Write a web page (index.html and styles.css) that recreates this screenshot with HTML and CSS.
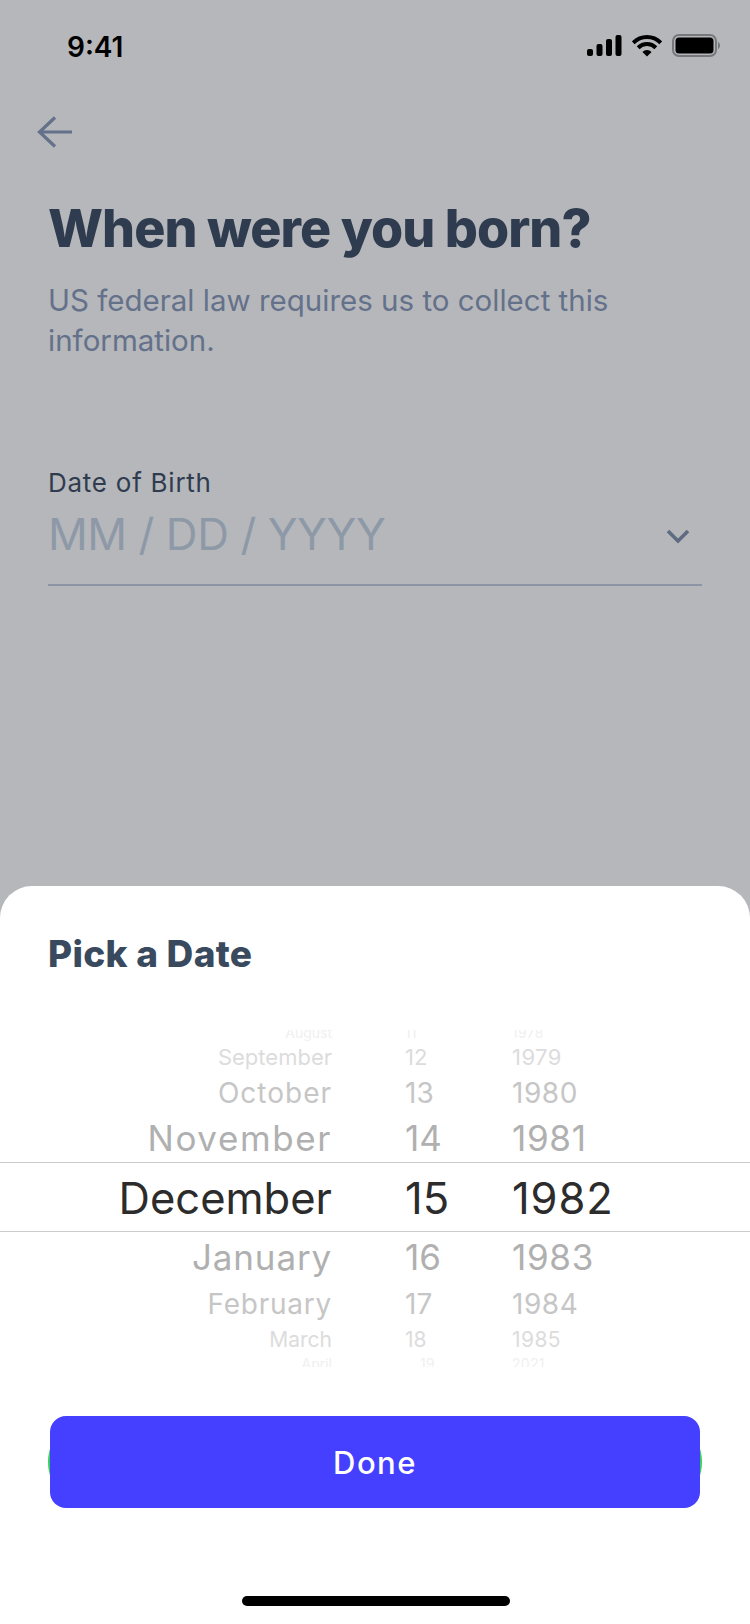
FILE: index.html
```html
<!DOCTYPE html>
<html lang="en">
<head>
    <meta charset="UTF-8">
    <meta name="viewport" content="width=device-width, initial-scale=1.0">
    <title>Date of Birth</title>
    <link rel="stylesheet" href="styles.css">
</head>
<body>
    <div class="screen">
        <div class="backdrop">
            <div class="status-bar">
                <span class="status-time">9:41</span>
                <div class="status-icons">
                    <svg width="35" height="22" viewBox="0 0 35 22"><rect x="0" y="14" width="6" height="7" rx="2"/><rect x="9.5" y="9" width="6" height="12" rx="2"/><rect x="19" y="4" width="6" height="17" rx="2"/><rect x="28.5" y="0" width="6" height="21" rx="2"/></svg>
                    <svg width="30" height="23" viewBox="0 0 30 23"><path d="M1.2 8.800a19.500 19.500 0 0 1 27.600 0" fill="none" stroke="#000" stroke-width="4"/><path d="M6.160 13.760a12.500 12.500 0 0 1 17.680 0" fill="none" stroke="#000" stroke-width="4"/><path d="M10.400 18 15 22.600l4.600-4.600a6.500 6.500 0 0 0-9.200 0z"/></svg>
                    <svg width="48" height="23" viewBox="0 0 48 23"><rect x="1" y="1" width="43" height="21" rx="6" fill="none" stroke="#77787b" stroke-width="2"/><rect x="3.5" y="3.5" width="38" height="16" rx="3.5"/><path d="M46 8v7c1.2-.5 2-2 2-3.500S47.200 8.500 46 8z" fill="#77787b"/></svg>
                </div>
            </div>
            <svg class="back-arrow" width="36" height="32" viewBox="0 0 36 32"><path d="M35 16H3M18 1.500 2.500 16 18 30.500" fill="none" stroke="#64718a" stroke-width="3.200"/></svg>
            <h1 class="title">When were you born?</h1>
            <p class="subtitle">US federal law requires us to collect this information.</p>
            <div class="field">
                <label class="field-label">Date of Birth</label>
                <div class="field-input">
                    <span class="placeholder">MM / DD / YYYY</span>
                    <svg class="chevron" width="24" height="15" viewBox="0 0 24 15"><path d="M2 2l10 10L22 2" fill="none" stroke="#5f6b80" stroke-width="3.600"/></svg>
                </div>
            </div>
        </div>
        <div class="sheet">
            <h2 class="sheet-title">Pick a Date</h2>
            <div class="picker">
                <div class="row row-aug"><span>August</span><span>11</span><span>1978</span></div>
                <div class="row row-sep"><span>September</span><span>12</span><span>1979</span></div>
                <div class="row row-oct"><span>October</span><span>13</span><span>1980</span></div>
                <div class="row row-nov"><span>November</span><span>14</span><span>1981</span></div>
                <div class="row row-dec"><span>December</span><span>15</span><span>1982</span></div>
                <div class="row row-jan"><span>January</span><span>16</span><span>1983</span></div>
                <div class="row row-feb"><span>February</span><span>17</span><span>1984</span></div>
                <div class="row row-mar"><span>March</span><span>18</span><span>1985</span></div>
                <div class="row row-apr"><span>April</span><span>19</span><span>2021</span></div>
            </div>
            <div class="done-wrap">
                <button class="done-btn">Done</button>
            </div>
            <div class="home-bar"></div>
        </div>
    </div>
</body>
</html>
```
FILE: styles.css
```css
body {
    margin: 0;
    font-family: Inter, "Open Sans", sans-serif;
}

.screen {
    width: 750px;
    height: 1624px;
    display: flex;
    flex-direction: column;
    background: #b6b7bb;
    overflow: hidden;
}

.backdrop {
    flex: 1;
    padding: 0 48px;
}

.status-bar {
    display: flex;
    justify-content: space-between;
    align-items: center;
    height: 23px;
    padding: 34px 0 0 19px;
    margin-right: -18px;
}

.status-time {
    margin-top: 2px;
    font-weight: 600;
    font-size: 28px;
    color: #000;
}

.status-icons {
    display: flex;
    align-items: center;
    gap: 10px;
}

.back-arrow {
    display: block;
    margin: 59px 0 0 -11px;
}

.title {
    margin: 49px 0 0;
    font-size: 52px;
    line-height: 64px;
    font-weight: 800;
    letter-spacing: -0.95px;
    color: #2f3c4f;
}

.subtitle {
    margin: 19px 0 0;
    font-size: 29.5px;
    line-height: 40px;
    color: #64718a;
}

.field {
    margin-top: 107px;
}

.field-label {
    display: block;
    font-size: 26px;
    line-height: 32px;
    letter-spacing: 0.75px;
    color: #2f3c4f;
}

.field-input {
    display: flex;
    justify-content: space-between;
    align-items: center;
    height: 69px;
    padding: 0 12px 16px 0;
    border-bottom: 2px solid #8d94a5;
}

.placeholder {
    font-size: 44px;
    letter-spacing: -0.45px;
    color: #8e99a8;
}

.chevron {
    margin-top: 6px;
}

.sheet {
    height: 738px;
    box-sizing: border-box;
    background: #fff;
    border-radius: 32px 32px 0 0;
    padding-top: 46px;
    display: flex;
    flex-direction: column;
}

.sheet-title {
    margin: 0 0 0 48px;
    font-size: 37px;
    line-height: 44px;
    font-weight: 800;
    letter-spacing: 0.3px;
    color: #3a4a5e;
}

.picker {
    margin-top: 54px;
    position: relative;
}

.picker::before {
    content: '';
    position: absolute;
    left: 0;
    right: 0;
    top: 132px;
    height: 68px;
    border-top: 1px solid #ccc;
    border-bottom: 1px solid #ccc;
}

.row {
    display: grid;
    grid-template-columns: 332px 180px 1fr;
    align-items: center;
    overflow: hidden;
    white-space: nowrap;
}

.row span:first-child {
    text-align: right;
}

.row span:nth-child(2) {
    padding-left: 73px;
}

.row span:last-child {
    letter-spacing: 0.02em;
}

.row-aug { height: 12px; font-size: 14px; line-height: 14px; align-items: start; color: #f0f0f0; }
.row-sep { height: 30px; font-size: 22px; color: #dcdcdc; }
.row-oct { height: 41px; font-size: 28px; color: #c6c6c6; }
.row-nov { height: 50px; font-size: 35px; color: #b0b0b0; }
.row-dec { height: 69px; font-size: 43.5px; color: #2c2c2c; }
.row-jan { height: 49px; font-size: 35px; color: #b0b0b0; }
.row-feb { height: 46px; font-size: 28px; color: #c6c6c6; }
.row-mar { height: 25px; font-size: 21px; color: #dcdcdc; }
.row-apr { height: 10px; padding-top: 5px; font-size: 14px; line-height: 14px; align-items: start; color: #f0f0f0; }

.row-aug span { margin-top: -4px; }
.row-oct span:first-child { letter-spacing: 1px; }
.row-nov span:first-child { letter-spacing: 1.6px; }
.row-jan span:first-child { letter-spacing: 0.85px; }
.row-feb span:first-child { letter-spacing: 0.75px; }
.row-apr span:nth-child(2) { padding-left: 88px; }

.done-wrap {
    position: relative;
    margin: 49px 50px 0;
}

.done-wrap::before {
    content: '';
    position: absolute;
    left: -2px;
    right: -2px;
    top: 0;
    bottom: 0;
    border-radius: 46px;
    background: #3ad05a;
}

.done-btn {
    position: relative;
    display: block;
    width: 100%;
    height: 92px;
    border: none;
    border-radius: 16px;
    background: #453fff;
    color: #fff;
    font-family: Inter, sans-serif;
    font-size: 31px;
    font-weight: 500;
    letter-spacing: 1.5px;
}

.home-bar {
    width: 268px;
    height: 10px;
    margin: auto 0 18px 242px;
    border-radius: 5px;
    background: #000;
}
```
